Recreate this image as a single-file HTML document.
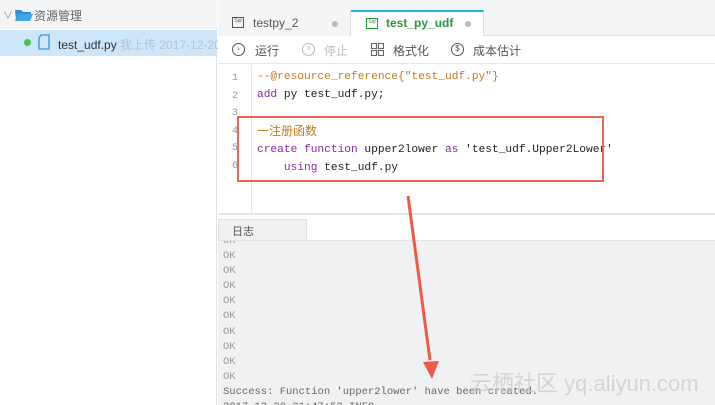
<!DOCTYPE html>
<html><head><meta charset="utf-8"><style>
*{margin:0;padding:0;box-sizing:border-box}
body{width:715px;height:405px;overflow:hidden;background:#fff;font-family:"Liberation Sans","Noto Sans CJK SC",sans-serif;position:relative;font-size:12px}
.a{position:absolute}
.mono{font-family:"Liberation Mono","Noto Sans CJK SC",monospace;font-size:11.2px}
</style></head><body>
<div class="a" style="left:0;top:0;width:217px;height:405px;background:#fff;border-right:1px solid #e3e3e3"></div>
<div class="a" style="left:0;top:0;width:217px;height:29px;background:#f3f4f5"></div>
<div class="a" style="left:3px;top:7px;color:#888;font-size:10px">∨</div>
<svg class="a" style="left:15px;top:8px" width="18" height="13"><path d="M0 2h6l2 2h8v2H4L1 12z" fill="#2a8fd8"/><path d="M3 6h15l-3 7H0z" fill="#3ea3e8"/></svg>
<div class="a" style="left:34px;top:7px;color:#666;font-size:12px">资源管理</div>
<div class="a" style="left:0;top:30px;width:217px;height:26px;background:#cde6fa"></div>
<div class="a" style="left:24px;top:39px;width:7px;height:7px;border-radius:50%;background:#49c243"></div>
<svg class="a" style="left:38px;top:34px" width="12" height="16"><path d="M3 1h8v14H1V4z" fill="none" stroke="#3a95d8" stroke-width="1.3"/></svg>
<div class="a" style="left:58px;top:36px;color:#333;font-size:12px;white-space:nowrap">test_udf.py <span style="color:#b8c2cc">我上传 2017-12-20 21</span></div>
<div class="a" style="left:218px;top:0;width:497px;height:36px;background:#f4f5f6;border-bottom:1px solid #e0e0e0"></div>
<div class="a" style="left:218px;top:10px;width:133px;height:26px;background:#f4f5f6;border-right:1px solid #ddd"></div>
<div class="a" style="left:232px;top:17px;width:12px;height:11px;border:1.3px solid #555;font-size:5px;color:#555;line-height:7px;text-align:center">Sql</div>
<div class="a" style="left:253px;top:16px;color:#555;font-size:12px">testpy_2</div>
<div class="a" style="left:332px;top:21px;width:6px;height:6px;border-radius:50%;background:#bbb"></div>
<div class="a" style="left:351px;top:10px;width:133px;height:27px;background:#fff;border-top:2px solid #1fb7d6;border-right:1px solid #ddd"></div>
<div class="a" style="left:366px;top:18px;width:12px;height:11px;border:1.3px solid #2a9a3c;font-size:5px;color:#2a9a3c;line-height:7px;text-align:center">Sql</div>
<div class="a" style="left:386px;top:16px;color:#2a9a3c;font-size:12px;font-weight:bold">test_py_udf</div>
<div class="a" style="left:465px;top:21px;width:6px;height:6px;border-radius:50%;background:#bbb"></div>
<div class="a" style="left:218px;top:36px;width:497px;height:28px;background:#fff;border-bottom:1px solid #e6e6e6"></div>
<div class="a" style="left:232px;top:43px;width:13px;height:13px;border:1.2px solid #555;border-radius:50%;font-size:8px;line-height:10px;text-align:center;color:#555">›</div>
<div class="a" style="left:255px;top:42px;color:#555">运行</div>
<div class="a" style="left:302px;top:43px;width:13px;height:13px;border:1.2px solid #bbb;border-radius:50%;font-size:7px;line-height:10px;text-align:center;color:#bbb">॥</div>
<div class="a" style="left:324px;top:42px;color:#bbb">停止</div>
<svg class="a" style="left:371px;top:43px" width="13" height="13"><g fill="none" stroke="#666" stroke-width="1.1"><rect x=".5" y=".5" width="5" height="5"/><rect x="7.5" y=".5" width="5" height="5"/><rect x=".5" y="7.5" width="5" height="5"/><rect x="7.5" y="7.5" width="5" height="5"/></g></svg>
<div class="a" style="left:393px;top:42px;color:#555">格式化</div>
<div class="a" style="left:451px;top:43px;width:13px;height:13px;border:1.2px solid #555;border-radius:50%;font-size:8px;line-height:10px;text-align:center;color:#555">$</div>
<div class="a" style="left:473px;top:42px;color:#555">成本估计</div>
<div class="a" style="left:218px;top:65px;width:34px;height:148px;background:#fff;border-right:1px solid #e6e6e6"></div>
<div class="a mono" style="left:232px;top:70px;color:#999;font-size:10px;line-height:17.5px">1<br>2<br>3<br>4<br>5<br>6</div>
<div class="a mono" style="left:257px;top:69px;line-height:17.6px;white-space:pre;color:#222"><span style="color:#c77820">--@resource_reference{"test_udf.py"}</span>
<span style="color:#8a2aa8">add</span> py test_udf.py;

<span style="color:#c77820;font-family:'Noto Sans CJK SC',sans-serif;font-size:12px">一注册函数</span>
<span style="color:#8a2aa8">create function</span> upper2lower <span style="color:#8a2aa8">as</span> 'test_udf.Upper2Lower'
    <span style="color:#8a2aa8">using</span> test_udf.py</div>
<div class="a" style="left:237px;top:116px;width:367px;height:66px;border:2px solid #e8665a"></div>
<div class="a" style="left:218px;top:213px;width:497px;height:2px;background:#e6e6e6"></div>
<div class="a" style="left:218px;top:219px;width:89px;height:22px;background:#f0f1f2;border:1px solid #e2e2e2;border-bottom:none"></div>
<div class="a" style="left:232px;top:223px;color:#555;font-size:11px">日志</div>
<div class="a" style="left:218px;top:240px;width:497px;height:165px;background:#f0f1f2;border-top:1px solid #e2e2e2;overflow:hidden">
<div class="a mono" style="left:5px;top:-7px;color:#999;font-size:10.5px;line-height:15.1px;white-space:pre">OK
OK
OK
OK
OK
OK
OK
OK
OK
OK
<span style="color:#666">Success: Function 'upper2lower' have been created.
2017-12-20 21:47:52 INFO</span></div></div>
<div class="a" style="left:470px;top:366px;color:rgba(200,200,200,.7);font-size:22px;white-space:nowrap">云栖社区 yq.aliyun.com</div>
<svg class="a" style="left:0;top:0" width="715" height="405"><line x1="408" y1="196" x2="430" y2="360" stroke="#ee5a48" stroke-width="3"/><path d="M423 362l16-1-7 18z" fill="#ee5a48"/></svg>
</body></html>
